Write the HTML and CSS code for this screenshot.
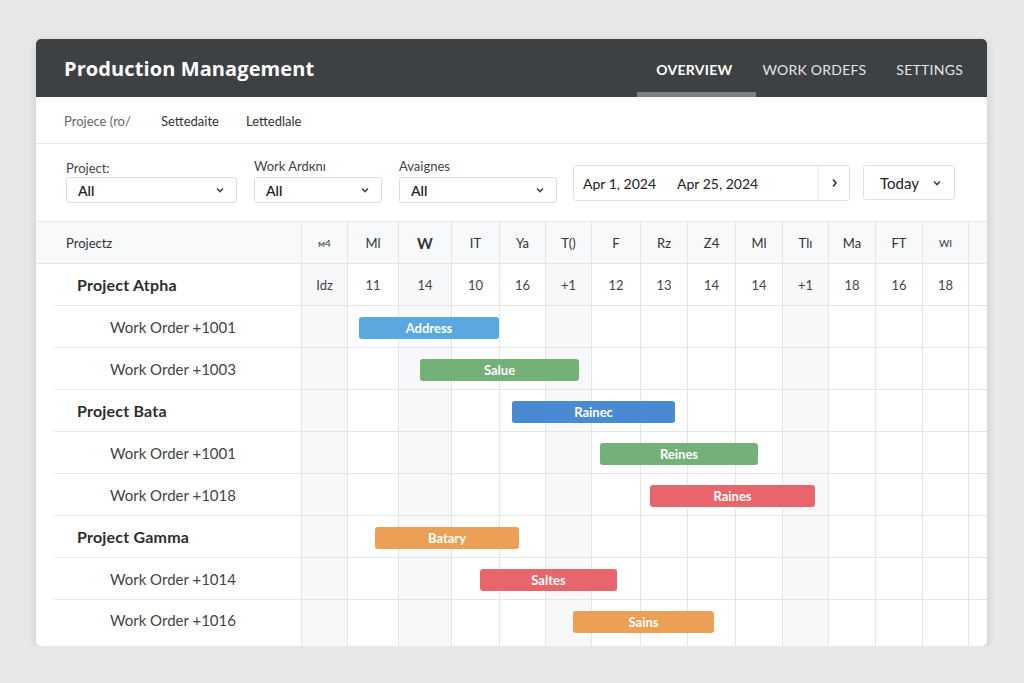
FILE: index.html
```html
<!DOCTYPE html>
<html>
<head>
<meta charset="utf-8">
<title>Production Management</title>
<link rel="stylesheet" href="styles.css">
</head>
<body>
<div class="page">
  <div class="card">
    <header class="topbar">
      <h1 class="title">Production Management</h1>
      <nav class="nav">
        <a class="nav-item active">OVERVIEW</a>
        <a class="nav-item">WORK ORDEFS</a>
        <a class="nav-item">SETTINGS</a>
      </nav>
    </header>

    <div class="subbar">
      <span class="sub-item sub-muted">Projece (ro/</span>
      <span class="sub-item sub-second">Settedaite</span>
      <span class="sub-item">Lettedlale</span>
    </div>

    <div class="filters">
      <div class="field field-project">
        <label class="field-label">Project:</label>
        <div class="select"><span>All</span><svg class="chev" width="8" height="6" viewBox="0 0 8 6"><polyline points="1,1.5 4,4.5 7,1.5" fill="none" stroke="#444" stroke-width="1.6"/></svg></div>
      </div>
      <div class="field field-work">
        <label class="field-label label-high">Work Ardкnı</label>
        <div class="select"><span>All</span><svg class="chev" width="8" height="6" viewBox="0 0 8 6"><polyline points="1,1.5 4,4.5 7,1.5" fill="none" stroke="#444" stroke-width="1.6"/></svg></div>
      </div>
      <div class="field field-assign">
        <label class="field-label label-high">Avaignes</label>
        <div class="select"><span>All</span><svg class="chev" width="8" height="6" viewBox="0 0 8 6"><polyline points="1,1.5 4,4.5 7,1.5" fill="none" stroke="#444" stroke-width="1.6"/></svg></div>
      </div>
      <div class="daterange">
        <span class="date-from">Apr 1, 2024</span>
        <span class="date-to">Apr 25, 2024</span>
        <span class="date-next"><svg width="7" height="10" viewBox="0 0 7 10"><polyline points="2,1.5 5,5 2,8.5" fill="none" stroke="#333" stroke-width="1.6"/></svg></span>
      </div>
      <div class="today">
        <span>Today</span>
        <svg width="8" height="6" viewBox="0 0 8 6"><polyline points="1,1.5 4,4.5 7,1.5" fill="none" stroke="#444" stroke-width="1.6"/></svg>
      </div>
    </div>

    <div class="gantt">
      <div class="row head">
        <div class="lcell"><div class="lin">Projectz</div></div>
        <div class="tl">
          <i class="tiny">м4</i><i>Ml</i><i class="big">W</i><i>IT</i><i>Ya</i><i>T()</i><i>F</i><i>Rz</i><i>Z4</i><i>Ml</i><i>Tlı</i><i>Ma</i><i>FT</i><i class="tiny">WI</i><i></i>
        </div>
      </div>

      <div class="row proj">
        <div class="lcell"><div class="lin">Project Atpha</div></div>
        <div class="tl nums">
          <i>Idz</i><i>11</i><i>14</i><i>10</i><i>16</i><i>+1</i><i>12</i><i>13</i><i>14</i><i>14</i><i>+1</i><i>18</i><i>16</i><i>18</i><i></i>
        </div>
      </div>

      <div class="row wo">
        <div class="lcell"><div class="lin">Work Order +1001</div></div>
        <div class="tl">
          <i></i><i></i><i></i><i></i><i></i><i></i><i></i><i></i><i></i><i></i><i></i><i></i><i></i><i></i><i></i>
          <div class="bar blue" style="left:57px;width:140px">Address</div>
        </div>
      </div>

      <div class="row wo">
        <div class="lcell"><div class="lin">Work Order +1003</div></div>
        <div class="tl">
          <i></i><i></i><i></i><i></i><i></i><i></i><i></i><i></i><i></i><i></i><i></i><i></i><i></i><i></i><i></i>
          <div class="bar green" style="left:118px;width:159px">Salue</div>
        </div>
      </div>

      <div class="row proj">
        <div class="lcell"><div class="lin">Project Bata</div></div>
        <div class="tl">
          <i></i><i></i><i></i><i></i><i></i><i></i><i></i><i></i><i></i><i></i><i></i><i></i><i></i><i></i><i></i>
          <div class="bar blue-dark" style="left:210px;width:163px">Rainec</div>
        </div>
      </div>

      <div class="row wo">
        <div class="lcell"><div class="lin">Work Order +1001</div></div>
        <div class="tl">
          <i></i><i></i><i></i><i></i><i></i><i></i><i></i><i></i><i></i><i></i><i></i><i></i><i></i><i></i><i></i>
          <div class="bar green" style="left:298px;width:158px">Reines</div>
        </div>
      </div>

      <div class="row wo">
        <div class="lcell"><div class="lin">Work Order +1018</div></div>
        <div class="tl">
          <i></i><i></i><i></i><i></i><i></i><i></i><i></i><i></i><i></i><i></i><i></i><i></i><i></i><i></i><i></i>
          <div class="bar red" style="left:348px;width:165px">Raines</div>
        </div>
      </div>

      <div class="row proj">
        <div class="lcell"><div class="lin">Project Gamma</div></div>
        <div class="tl">
          <i></i><i></i><i></i><i></i><i></i><i></i><i></i><i></i><i></i><i></i><i></i><i></i><i></i><i></i><i></i>
          <div class="bar orange" style="left:73px;width:144px">Batary</div>
        </div>
      </div>

      <div class="row wo">
        <div class="lcell"><div class="lin">Work Order +1014</div></div>
        <div class="tl">
          <i></i><i></i><i></i><i></i><i></i><i></i><i></i><i></i><i></i><i></i><i></i><i></i><i></i><i></i><i></i>
          <div class="bar red" style="left:178px;width:137px">Saltes</div>
        </div>
      </div>

      <div class="row wo last">
        <div class="lcell"><div class="lin">Work Order +1016</div></div>
        <div class="tl">
          <i></i><i></i><i></i><i></i><i></i><i></i><i></i><i></i><i></i><i></i><i></i><i></i><i></i><i></i><i></i>
          <div class="bar orange" style="left:271px;width:141px">Sains</div>
        </div>
      </div>
    </div>
  </div>
</div>
</body>
</html>
```

FILE: styles.css
```css
* { box-sizing: border-box; }

body {
  margin: 0;
  background: #e8e8e9;
  font-family: Lato, "Liberation Sans", sans-serif;
  color: #333;
}

.page {
  padding: 39px 37px 0 36px;
}

.card {
  width: 951px;
  background: #fff;
  border-radius: 5px;
  box-shadow: 0 3px 10px rgba(0, 0, 0, 0.14);
  overflow: hidden;
}

/* Top bar */
.topbar {
  height: 58px;
  background: #3e4144;
  display: flex;
  align-items: center;
  padding-left: 28px;
}

.title {
  margin: 0;
  font-family: "Open Sans", Lato, sans-serif;
  font-size: 20px;
  font-weight: 700;
  color: #fff;
  letter-spacing: 0.1px;
}

.nav {
  margin-left: auto;
  align-self: stretch;
  display: flex;
  gap: 30px;
  padding-right: 24px;
}

.nav-item {
  position: relative;
  display: flex;
  align-items: center;
  padding-top: 2px;
  font-size: 14px;
  letter-spacing: 0.25px;
  color: #e4e5e6;
}

.nav-item.active {
  font-weight: 700;
  color: #fff;
}

.nav-item.active::after {
  content: "";
  position: absolute;
  left: -19px;
  right: -24px;
  bottom: 0;
  height: 5px;
  background: #7c7f83;
}

/* Sub bar */
.subbar {
  height: 47px;
  border-bottom: 1px solid #e7e8ea;
  display: flex;
  align-items: center;
  padding-left: 28px;
  padding-top: 2px;
  font-size: 13px;
  color: #333;
}

.sub-item { display: block; }

.sub-muted {
  width: 97px;
  font-size: 13px;
  color: #666;
}

.sub-second { width: 85px; }

/* Filters */
.filters {
  height: 78px;
  display: flex;
  align-items: flex-end;
  gap: 17px;
  padding: 0 32px 18px 30px;
  border-bottom: 1px solid #e7e8ea;
}

.field {
  display: flex;
  flex-direction: column;
  gap: 1px;
}

.field-project { width: 171px; }
.field-work { width: 128px; }
.field-assign { width: 158px; margin-right: -1px; }

.field-label {
  font-size: 13px;
  line-height: 16px;
  color: #444;
}

.label-high { margin-bottom: 2px; }

.select {
  height: 26px;
  border: 1px solid #dcdde0;
  border-radius: 3px;
  display: flex;
  align-items: center;
  justify-content: space-between;
  padding: 0 12px 0 11px;
  font-size: 14px;
  font-weight: 600;
  color: #222;
}

.daterange {
  width: 277px;
  height: 36px;
  margin-bottom: 2px;
  border: 1px solid #e0e1e4;
  border-radius: 3px;
  display: flex;
  align-items: center;
  font-size: 14px;
  color: #222;
}

.date-from {
  padding-left: 9px;
  width: 103px;
}

.date-to { flex: 1; }

.date-next {
  width: 31px;
  height: 100%;
  border-left: 1px solid #e8e9eb;
  display: flex;
  align-items: center;
  justify-content: center;
}

.today {
  width: 92px;
  height: 35px;
  margin-bottom: 3px;
  margin-left: -4px;
  border: 1px solid #e0e1e4;
  border-radius: 3px;
  display: flex;
  align-items: center;
  gap: 14px;
  padding-left: 16px;
  font-size: 15px;
  color: #222;
}

/* Gantt */
.row {
  display: flex;
  height: 42px;
}

.row.last { height: 46px; }

.row.head { background: #f8f9fa; }

.lcell {
  width: 266px;
  flex: none;
  display: flex;
  padding-left: 18px;
  border-right: 1px solid #e3e5e8;
}

.lin {
  flex: 1;
  display: flex;
  align-items: center;
  border-bottom: 1px solid #e8e9ec;
}

.head .lcell { padding-left: 0; }

.head .lin {
  padding-left: 30px;
  font-size: 13px;
  color: #333;
  border-bottom-color: #e3e5e8;
}

.proj .lin {
  padding-left: 23px;
  font-size: 16px;
  font-weight: 700;
  letter-spacing: 0.2px;
  color: #2b2d30;
}

.wo .lin {
  padding-left: 56px;
  font-size: 15px;
  color: #444;
}

.last .lin {
  border-bottom: none;
  padding-bottom: 6px;
}

.tl {
  position: relative;
  flex: 1;
  display: grid;
  grid-template-columns: 46px 51px 53px 48px 46px 46px 49px 47px 48px 47px 46px 47px 47px 46px 1fr;
}

.tl i {
  font-style: normal;
  display: flex;
  align-items: center;
  justify-content: center;
  border-right: 1px solid #e3e5e8;
  border-bottom: 1px solid #e3e5e8;
  font-size: 13px;
  color: #333;
}

.last .tl i { border-bottom: none; }

.tl i:nth-child(15) { border-right: none; }

.tl i:nth-child(1),
.tl i:nth-child(3),
.tl i:nth-child(6),
.tl i:nth-child(11) {
  background: #f7f8fa;
}

.head .tl i { background: transparent; }

.tl i.tiny { font-size: 10px; }
.tl i.big { font-size: 15px; font-weight: 700; }

.nums i { color: #444; }

.bar {
  position: absolute;
  top: 11px;
  height: 22px;
  border-radius: 3px;
  display: flex;
  align-items: center;
  justify-content: center;
  color: #fff;
  font-size: 13px;
  font-weight: 700;
}

.blue { background: #5ba7df; }
.blue-dark { background: #4a8ad3; }
.green { background: #74b078; }
.red { background: #e7666b; }
.orange { background: #eca056; }
```
